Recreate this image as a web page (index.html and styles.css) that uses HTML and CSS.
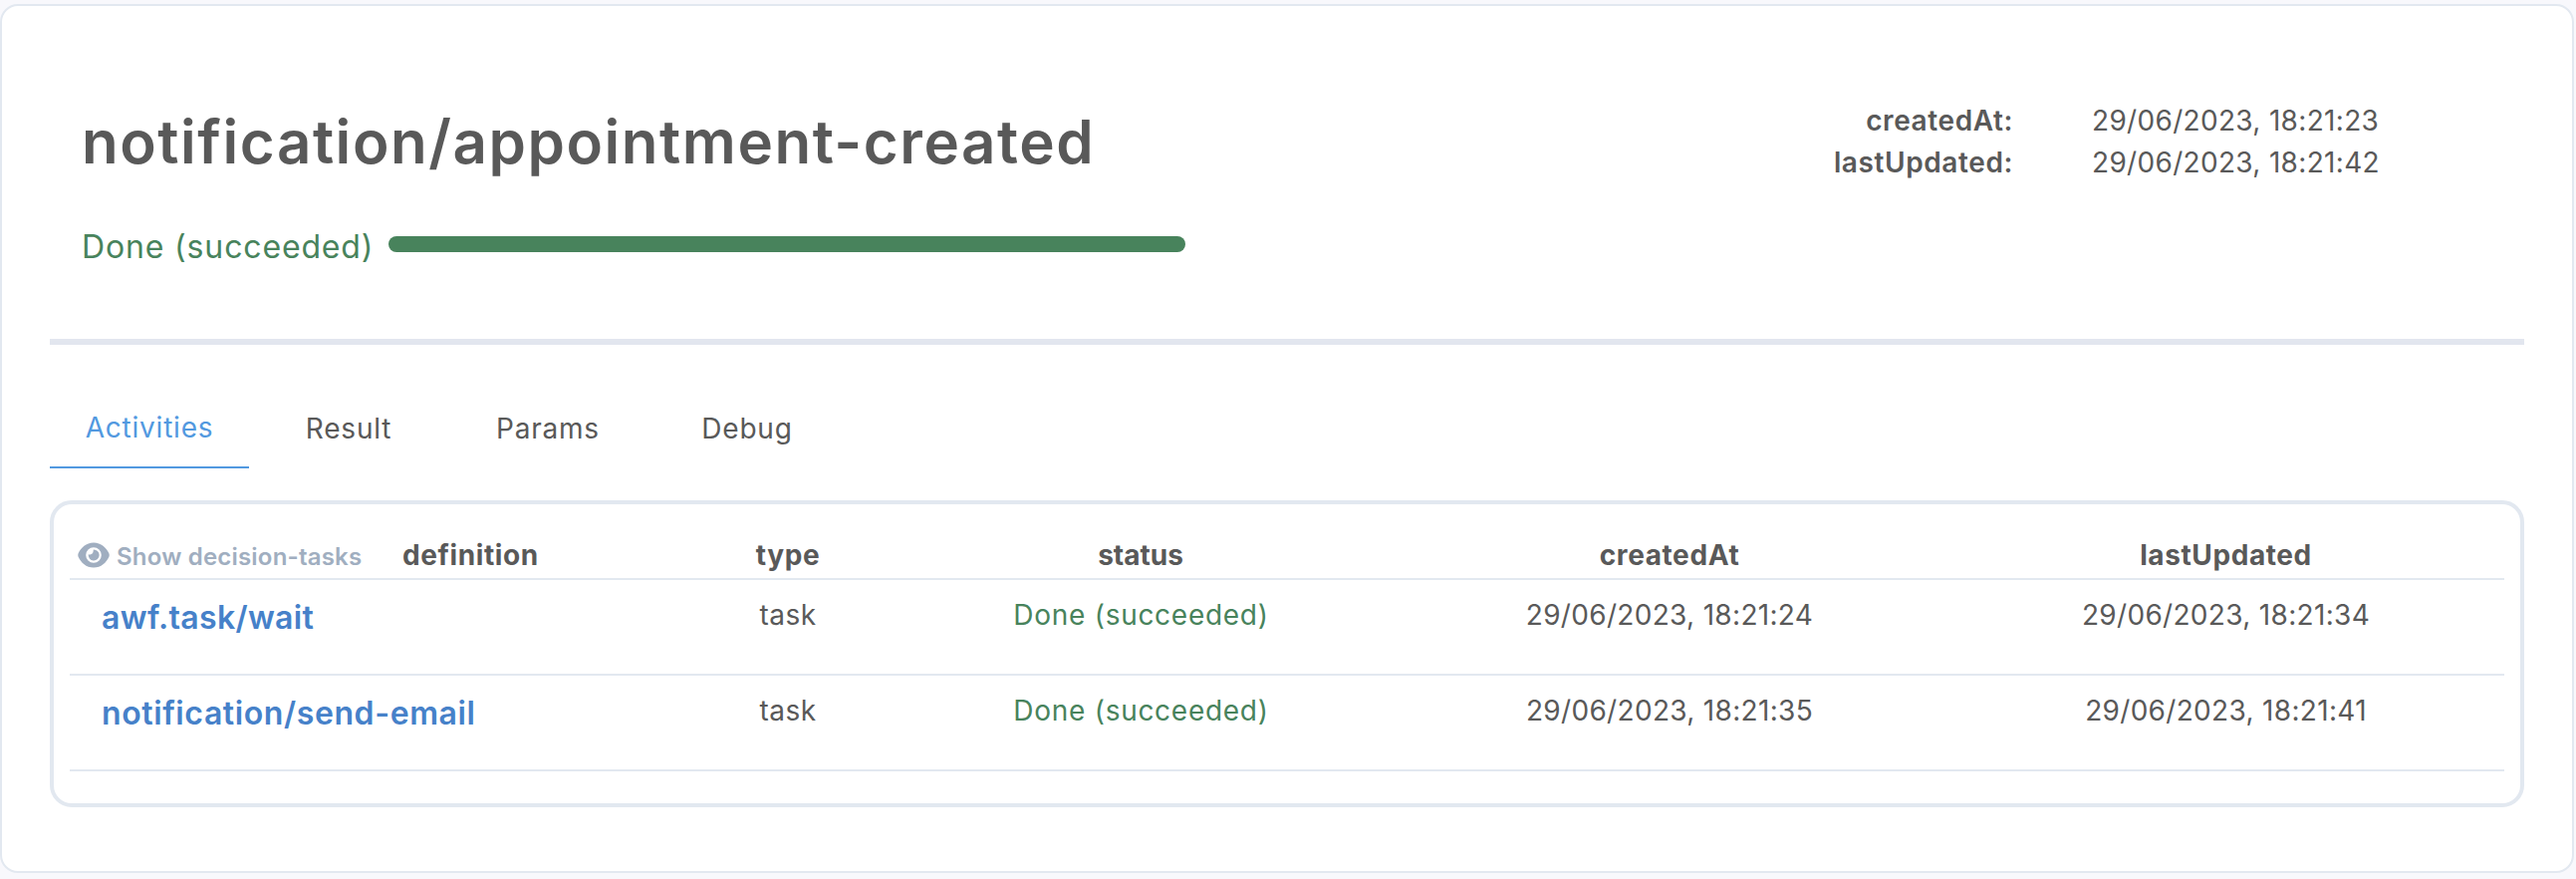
FILE: index.html
```html
<!DOCTYPE html>
<html lang="en">
<head>
<meta charset="utf-8">
<title>notification/appointment-created</title>
<link rel="stylesheet" href="styles.css">
</head>
<body>
<main class="card">
  <header class="head">
    <div class="summary">
      <h1 class="title">notification/appointment-created</h1>
      <div class="progress">
        <span class="progress-label">Done (succeeded)</span>
        <div class="bar"></div>
      </div>
    </div>
    <dl class="meta">
      <dt>createdAt:</dt><dd>29/06/2023, 18:21:23</dd>
      <dt>lastUpdated:</dt><dd>29/06/2023, 18:21:42</dd>
    </dl>
  </header>
  <nav class="tabs">
    <a class="tab active">Activities</a>
    <a class="tab">Result</a>
    <a class="tab">Params</a>
    <a class="tab">Debug</a>
  </nav>
  <section class="panel">
    <div class="row row-head">
      <div class="first">
        <button class="toggle">
          <svg class="eye" viewBox="0 0 32 26">
            <path fill="currentColor" fill-rule="evenodd" d="M16 .5C23.500 .5 28.700 5.500 31.500 11.600Q32 13 31.500 14.400C28.700 20.500 23.500 25.500 16 25.500S3.300 20.500 .5 14.400Q0 13 .5 11.600C3.300 5.500 8.500 .5 16 .5ZM16 5.200A7.800 7.800 0 1 0 16 20.800A7.800 7.800 0 1 0 16 5.200Z"/>
            <path fill="currentColor" d="M15.800 7.500A5.500 5.500 0 1 1 10.700 12.200Q15.600 13.500 15.800 7.500Z"/>
          </svg>
          <span>Show decision-tasks</span>
        </button>
        <span>definition</span>
      </div>
      <div>type</div>
      <div class="h-status">status</div>
      <div>createdAt</div>
      <div>lastUpdated</div>
    </div>
    <div class="row">
      <a class="link link-short">awf.task/wait</a>
      <div class="type">task</div>
      <div class="done">Done (succeeded)</div>
      <div class="date">29/06/2023, 18:21:24</div>
      <div class="date">29/06/2023, 18:21:34</div>
    </div>
    <div class="row">
      <a class="link">notification/send-email</a>
      <div class="type">task</div>
      <div class="done">Done (succeeded)</div>
      <div class="date">29/06/2023, 18:21:35</div>
      <div class="date">29/06/2023, 18:21:41</div>
    </div>
  </section>
</main>
</body>
</html>
```
FILE: styles.css
```css
* { box-sizing: border-box; }
body {
  margin: 0;
  height: 882px;
  padding: 4px 2px 6px 0;
  background: #f8f8fc;
  color: #595959;
  font: 400 28px/42px Inter, "Liberation Sans", sans-serif;
  overflow: hidden;
}
.card {
  height: 872px;
  padding: 0 48px;
  border: 2px solid #e2e8f0;
  border-radius: 18px;
  background: #fff;
}
.head {
  display: flex;
  justify-content: space-between;
  height: 340px;
  padding: 94px 146px 0 32px;
  border-bottom: 6px solid #e2e6ef;
}
.title { margin: 6px 0 0; font-size: 60px; line-height: 72px; font-weight: 600; letter-spacing: 1.55px; white-space: nowrap; }
.progress { display: flex; margin-top: 49px; }
.progress-label { width: 308px; padding-top: 1px; color: #48835c; font-size: 32px; line-height: 40px; letter-spacing: .85px; white-space: nowrap; }
.bar { width: 800px; height: 16px; margin-top: 10px; border-radius: 8px; background: #48835c; }
.meta { display: grid; grid-template-columns: auto 288px; grid-auto-rows: 42px; column-gap: 79px; margin: 0; white-space: nowrap; }
.meta dt { font-weight: 600; letter-spacing: .6px; text-align: right; }
.meta dd { margin: 0; letter-spacing: .32px; }
.tabs { display: flex; margin-top: 54px; }
.tab { width: 200px; height: 70px; line-height: 60px; letter-spacing: .78px; text-align: center; }
.active { line-height: 58px; color: #5299e0; border-bottom: 2px solid #5299e0; }
.panel {
  height: 308px;
  margin-top: 32px;
  padding: 0 16px;
  border: 4px solid #e2e8f0;
  border-radius: 22px;
}
.row {
  display: grid;
  grid-template-columns: 619px 204px 504px 558px 559px;
  height: 96px;
  padding-top: 14px;
  border-bottom: 2px solid #e2e8f0;
  text-align: center;
  white-space: nowrap;
}
.row-head { height: 76px; padding-top: 30px; font-weight: 700; letter-spacing: .6px; }
.h-status { letter-spacing: 0; }
.first { display: flex; align-items: baseline; padding-left: 8px; }
.toggle {
  display: flex;
  align-items: baseline;
  width: 326px;
  padding: 0;
  border: 0;
  background: none;
  color: #a0aec0;
  font: 600 24px/42px Inter, "Liberation Sans", sans-serif;
  letter-spacing: .2px;
  text-align: left;
}
.eye { align-self: flex-start; width: 32px; height: 26px; margin: 6px 7px 0 0; }
.link { padding: 4px 0 0 32px; color: #4681c9; font-size: 32px; line-height: 40px; font-weight: 600; letter-spacing: .6px; text-align: left; }
.link-short { letter-spacing: .35px; }
.type { letter-spacing: .5px; }
.done { padding-left: 1px; color: #48835c; letter-spacing: .72px; }
.date { letter-spacing: .32px; }
```
